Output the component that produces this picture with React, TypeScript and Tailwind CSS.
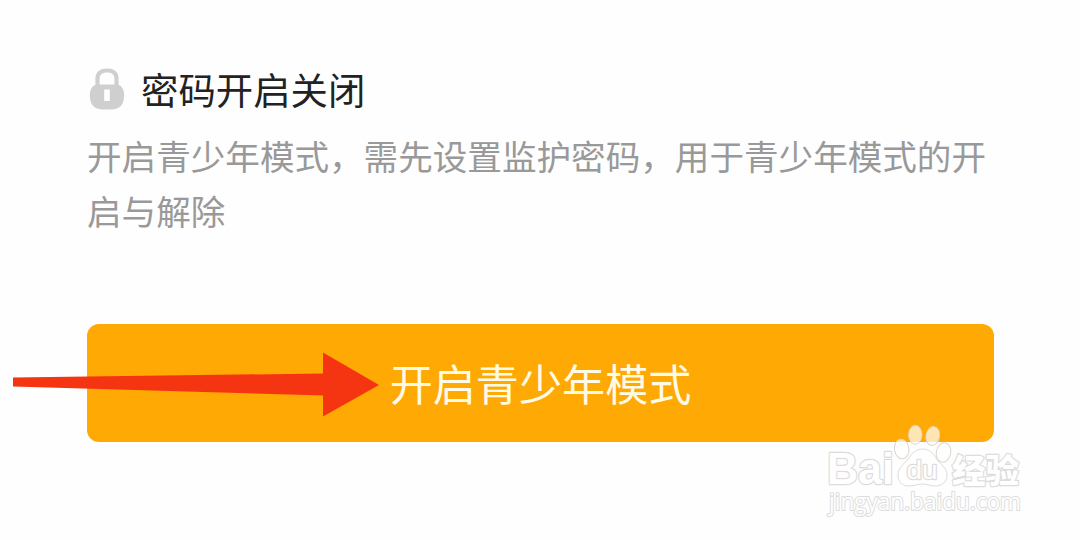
const fontClass = "font-['Noto_Sans_CJK_SC',sans-serif]";

function LockIcon() {
  return (
    <svg width="36" height="44" viewBox="0 0 36 44" className="shrink-0">
      <path d="M8.5 19V11.5Q8.5 3.5 18 3.5Q27.5 3.5 27.5 11.5V19" fill="none" stroke="#cfcfcf" strokeWidth="4.2" />
      <path
        d="M7 17.5H29Q35.2 20 35.2 28Q35.2 42.5 22 42.5H14Q0.8 42.5 0.8 28Q0.8 20 7 17.5Z"
        fill="#cfcfcf"
      />
      <rect x="15.2" y="22.5" width="5.6" height="11.5" fill="#fff" />
    </svg>
  );
}

function Arrow() {
  return (
    <svg width="368" height="66" viewBox="0 0 368 66" className="absolute -left-[75px] top-7">
      <path d="M1 25.5L311 21.5V0.5L367 33L311 64.5V43.5L1 34.5Z" fill="#f53512" />
    </svg>
  );
}

function Watermark() {
  return (
    <svg
      width="210"
      height="104"
      viewBox="0 0 210 104"
      className="absolute left-[820px] top-[418px]"
      fill="#fff"
      stroke="#dcdcdc"
      strokeWidth="1"
    >
      <g fillOpacity="0.7" stroke="#ddd5c8">
        <ellipse cx="81.7" cy="31" rx="7.2" ry="9.8" transform="rotate(-8 81.7 31)" />
        <ellipse cx="95.3" cy="16.8" rx="6.7" ry="9.5" />
        <ellipse cx="112.8" cy="18" rx="6.8" ry="9.5" transform="rotate(10 112.8 18)" />
        <ellipse cx="123.5" cy="34.5" rx="7.2" ry="9.8" transform="rotate(12 123.5 34.5)" />
      </g>
      <path d="M102.5 31C109 31 113 35 116 40C120 47 127 49 127 57C127 64 122 68 115 68C109 68 108 66 102.5 66C97 66 95 68 89 68C82 68 78 64 78 57C78 50 84 46 89 40C92 35 96 31 102.5 31Z" />
      <g strokeLinejoin="round" strokeWidth="2.4" className="[paint-order:stroke]">
        <text
          x="7"
          y="66"
          fontSize="44"
          textLength="67"
          lengthAdjust="spacingAndGlyphs"
          className="font-['Liberation_Sans',sans-serif] font-bold"
        >
          Bai
        </text>
        <text
          x="86.5"
          y="60.5"
          fontSize="26"
          textLength="31"
          lengthAdjust="spacingAndGlyphs"
          className="font-['Liberation_Sans',sans-serif]"
        >
          du
        </text>
        <text
          x="132"
          y="64.5"
          fontSize="33.5"
          textLength="67"
          lengthAdjust="spacingAndGlyphs"
          className="font-['Noto_Sans_CJK_SC',sans-serif] font-black"
        >
          经验
        </text>
        <text
          x="9"
          y="92"
          fontSize="23"
          strokeWidth="2"
          textLength="192"
          lengthAdjust="spacingAndGlyphs"
          className="font-['Open_Sans',sans-serif] font-medium"
        >
          jingyan.baidu.com
        </text>
      </g>
    </svg>
  );
}

export default function App() {
  return (
    <div className={`relative w-[1080px] h-[540px] overflow-hidden bg-[#fefefe] px-[87px] pt-[62px] ${fontClass}`}>
      {/* Title */}
      <div className="flex items-center h-[54px] gap-4 pl-0.5">
        <LockIcon />
        <h1 className="text-[37.4px] leading-[54px] text-[#222]">密码开启关闭</h1>
      </div>

      {/* Description */}
      <p className="mt-3 text-[34.6px] leading-[55px] text-[#999] whitespace-nowrap">
        开启青少年模式，需先设置监护密码，用于青少年模式的开
        <br />
        启与解除
      </p>

      {/* Action */}
      <div className="relative mt-[86px] w-[907px]">
        <button className="flex items-center justify-center w-full h-[118px] rounded-[12px] bg-[#ffa904] text-[43.1px] leading-none text-[#fffbe6]">
          开启青少年模式
        </button>
        <Arrow />
      </div>

      <Watermark />
    </div>
  );
}
